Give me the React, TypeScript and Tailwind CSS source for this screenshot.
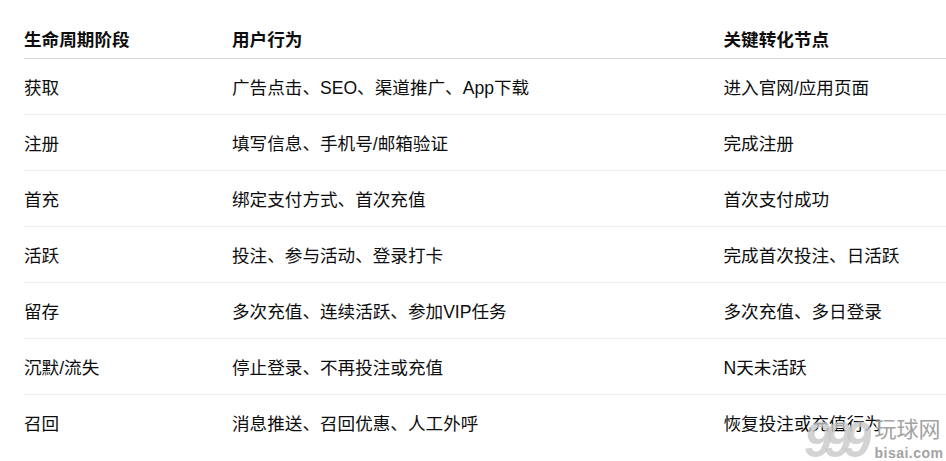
const rows = [
  ["获取", "广告点击、SEO、渠道推广、App下载", "进入官网/应用页面"],
  ["注册", "填写信息、手机号/邮箱验证", "完成注册"],
  ["首充", "绑定支付方式、首次充值", "首次支付成功"],
  ["活跃", "投注、参与活动、登录打卡", "完成首次投注、日活跃"],
  ["留存", "多次充值、连续活跃、参加VIP任务", "多次充值、多日登录"],
  ["沉默/流失", "停止登录、不再投注或充值", "N天未活跃"],
  ["召回", "消息推送、召回优惠、人工外呼", "恢复投注或充值行为"],
];

export default function App() {
  return (
    <div
      className="relative h-[461px] w-[946px] overflow-hidden bg-white pl-6 pt-[20px] text-[17.6px] text-[#0d0d0d]"
      style={{ fontFamily: '"Liberation Sans", "Noto Sans CJK SC", sans-serif' }}
    >
      <div className="grid h-[39px] grid-cols-[208px_491.5px_1fr] items-center border-b border-[#d9d9d9] pt-[2px] font-bold">
        <div>生命周期阶段</div>
        <div>用户行为</div>
        <div>关键转化节点</div>
      </div>
      <div>
        {rows.map((row) => (
          <div
            key={row[0]}
            className="grid h-[56px] grid-cols-[208px_491.5px_1fr] items-center border-b border-[#f0f0f0] pt-[3px] last:border-b-0"
          >
            <div>{row[0]}</div>
            <div>{row[1]}</div>
            <div>{row[2]}</div>
          </div>
        ))}
      </div>

      {/* watermark */}
      <div className="absolute left-[804px] top-[417px] flex items-start">
        <div className="mt-[2px] text-[50px] font-bold italic leading-[42px] tracking-[-8px] text-[#c8c8c8]/80">999</div>
        <div className="ml-[11px] flex flex-col items-start text-[#a3a3a3]">
          <span className="text-[22px] leading-[26px]">玩球网</span>
          <span className="mt-[3px] text-[14px] font-bold leading-[14px] tracking-[0.5px]">bisai.com</span>
        </div>
      </div>
    </div>
  );
}
